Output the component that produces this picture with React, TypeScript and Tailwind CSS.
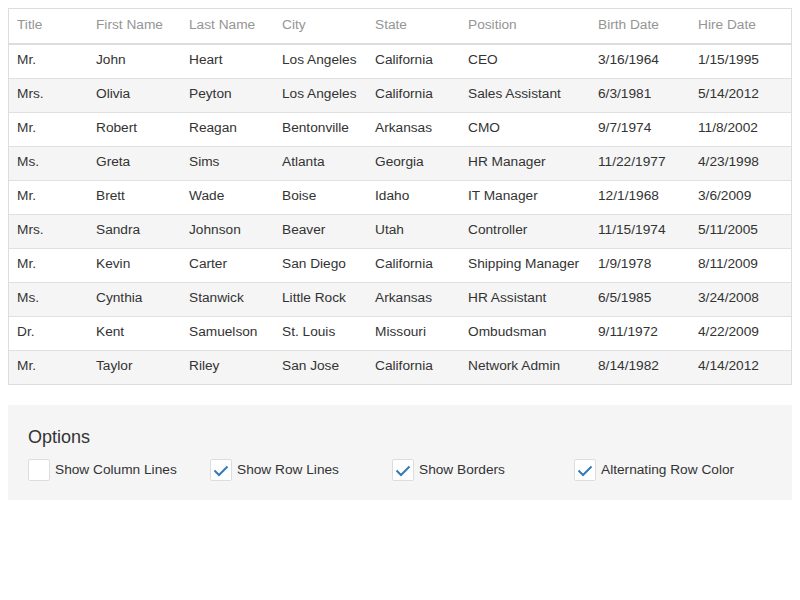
import React from 'react';

const columns = [
  { title: 'Title', width: 'w-[79px]' },
  { title: 'First Name', width: 'w-[93px]' },
  { title: 'Last Name', width: 'w-[93px]' },
  { title: 'City', width: 'w-[93px]' },
  { title: 'State', width: 'w-[93px]' },
  { title: 'Position', width: 'w-[130px]' },
  { title: 'Birth Date', width: 'w-[100px]' },
  { title: 'Hire Date', width: 'w-[101px]' },
];

const employees = [
  ['Mr.', 'John', 'Heart', 'Los Angeles', 'California', 'CEO', '3/16/1964', '1/15/1995'],
  ['Mrs.', 'Olivia', 'Peyton', 'Los Angeles', 'California', 'Sales Assistant', '6/3/1981', '5/14/2012'],
  ['Mr.', 'Robert', 'Reagan', 'Bentonville', 'Arkansas', 'CMO', '9/7/1974', '11/8/2002'],
  ['Ms.', 'Greta', 'Sims', 'Atlanta', 'Georgia', 'HR Manager', '11/22/1977', '4/23/1998'],
  ['Mr.', 'Brett', 'Wade', 'Boise', 'Idaho', 'IT Manager', '12/1/1968', '3/6/2009'],
  ['Mrs.', 'Sandra', 'Johnson', 'Beaver', 'Utah', 'Controller', '11/15/1974', '5/11/2005'],
  ['Mr.', 'Kevin', 'Carter', 'San Diego', 'California', 'Shipping Manager', '1/9/1978', '8/11/2009'],
  ['Ms.', 'Cynthia', 'Stanwick', 'Little Rock', 'Arkansas', 'HR Assistant', '6/5/1985', '3/24/2008'],
  ['Dr.', 'Kent', 'Samuelson', 'St. Louis', 'Missouri', 'Ombudsman', '9/11/1972', '4/22/2009'],
  ['Mr.', 'Taylor', 'Riley', 'San Jose', 'California', 'Network Admin', '8/14/1982', '4/14/2012'],
];

const options = [
  { label: 'Show Column Lines', checked: false },
  { label: 'Show Row Lines', checked: true },
  { label: 'Show Borders', checked: true },
  { label: 'Alternating Row Color', checked: true },
];

const CheckBox = ({ checked }: { checked: boolean }) => (
  <div className="w-[22px] h-[22px] shrink-0 bg-white border border-[#dddddd] rounded-[2px]">
    {checked && (
      <svg width="20" height="20" viewBox="0 0 20 20" fill="none">
        <path d="M3.5 10.5 L8 15 L16.5 6.5" stroke="#337ab7" strokeWidth="2" />
      </svg>
    )}
  </div>
);

export default function App() {
  return (
    <div className="w-[800px] h-[600px] bg-white p-2 text-[13.7px] text-[#333333] font-['Liberation_Sans',Arial,sans-serif]">
      {/* Grid */}
      <div className="border border-[#dddddd]">
        <table className="w-full table-fixed border-collapse">
          <thead>
            <tr className="h-[35px] border-b-2 border-[#dddddd]">
              {columns.map((col) => (
                <th key={col.title} className={`${col.width} px-2 pb-[2px] text-left font-normal text-[#959595] whitespace-nowrap`}>
                  {col.title}
                </th>
              ))}
            </tr>
          </thead>
          <tbody>
            {employees.map((row, i) => (
              <tr
                key={row[1]}
                className={`h-[34px] ${i < employees.length - 1 ? 'border-b border-[#e0e0e0]' : ''} ${i % 2 === 1 ? 'bg-[#f5f5f5]' : 'bg-white'}`}
              >
                {row.map((cell, j) => (
                  <td key={j} className="px-2 pb-px whitespace-nowrap">
                    {cell}
                  </td>
                ))}
              </tr>
            ))}
          </tbody>
        </table>
      </div>

      {/* Options */}
      <div className="mt-5 h-[95px] bg-[#f5f5f5] px-5 pt-[21px]">
        <div className="text-[18px] leading-[22px] text-[#333333]">Options</div>
        <div className="mt-[11px] flex">
          {options.map((opt) => (
            <div key={opt.label} className="w-[182px] flex items-center gap-[5px]">
              <CheckBox checked={opt.checked} />
              <span>{opt.label}</span>
            </div>
          ))}
        </div>
      </div>
    </div>
  );
}
